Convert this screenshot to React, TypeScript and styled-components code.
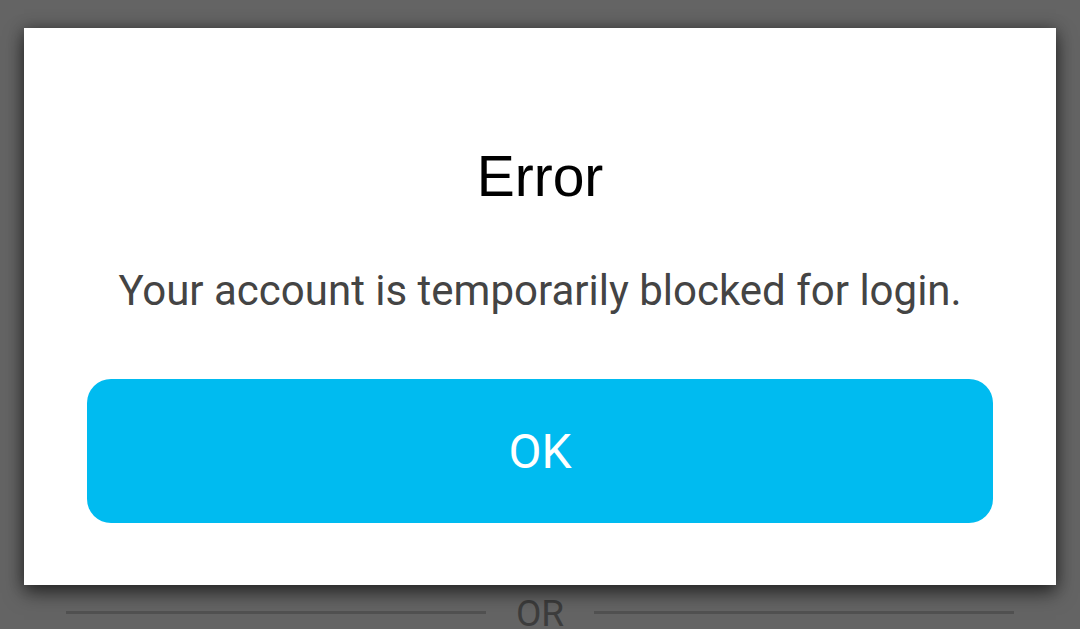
import React from 'react';
import styled, {createGlobalStyle} from "styled-components";

const GlobalStyle = createGlobalStyle`
    html, body {
        margin: 0;
        padding: 0;
        background: #646464;
        height: 100%;
        overflow: hidden;
    }
    #root {
        height: 100%;
    }
`

export default function App() {
    return (
        <>
            <GlobalStyle/>
            <Screen>
                <Dialog>
                    <Title>Error</Title>
                    <Message>Your account is temporarily blocked for login.</Message>
                    <OkButton>OK</OkButton>
                </Dialog>
                <Divider>
                    <Line/>
                    <DividerText>OR</DividerText>
                    <Line/>
                </Divider>
            </Screen>
        </>
    );
};

const Screen = styled.div`
    display: flex;
    flex-direction: column;
    padding: 28px 24px 0;
    height: 100%;
    box-sizing: border-box;
`

const Dialog = styled.div`
    flex-shrink: 0;
    background: #fff;
    height: 557px;
    box-sizing: border-box;
    display: flex;
    flex-direction: column;
    align-items: center;
    padding: 116px 63px 0;
    box-shadow: 0 8px 18px rgba(0, 0, 0, 0.55), 0 0 14px rgba(0, 0, 0, 0.3);
    position: relative;
    z-index: 1;
`

const Title = styled.h1`
    margin: 0;
    font-family: "Liberation Sans", Arial, sans-serif;
    font-weight: 400;
    font-size: 57px;
    line-height: 64px;
    color: #000;
`

const Message = styled.p`
    margin: 59px 0 0;
    font-family: Roboto, "Noto Sans", sans-serif;
    font-size: 42px;
    line-height: 48px;
    color: #444;
    white-space: nowrap;
`

const OkButton = styled.button`
    margin-top: 64px;
    width: 100%;
    height: 144px;
    flex-shrink: 0;
    border: none;
    border-radius: 24px;
    background: #00bbf0;
    color: #fff;
    font-family: Roboto, "Noto Sans", sans-serif;
    font-size: 48px;
    cursor: pointer;
`

const Divider = styled.div`
    display: flex;
    align-items: flex-start;
    gap: 30px;
    padding: 0 42px;
`

const Line = styled.div`
    flex: 1;
    height: 3px;
    margin-top: 26px;
    background: #515151;
`

const DividerText = styled.span`
    margin-top: 9px;
    font-family: Roboto, "Noto Sans", sans-serif;
    font-size: 37px;
    line-height: 40px;
    color: #3d3d3d;
`
